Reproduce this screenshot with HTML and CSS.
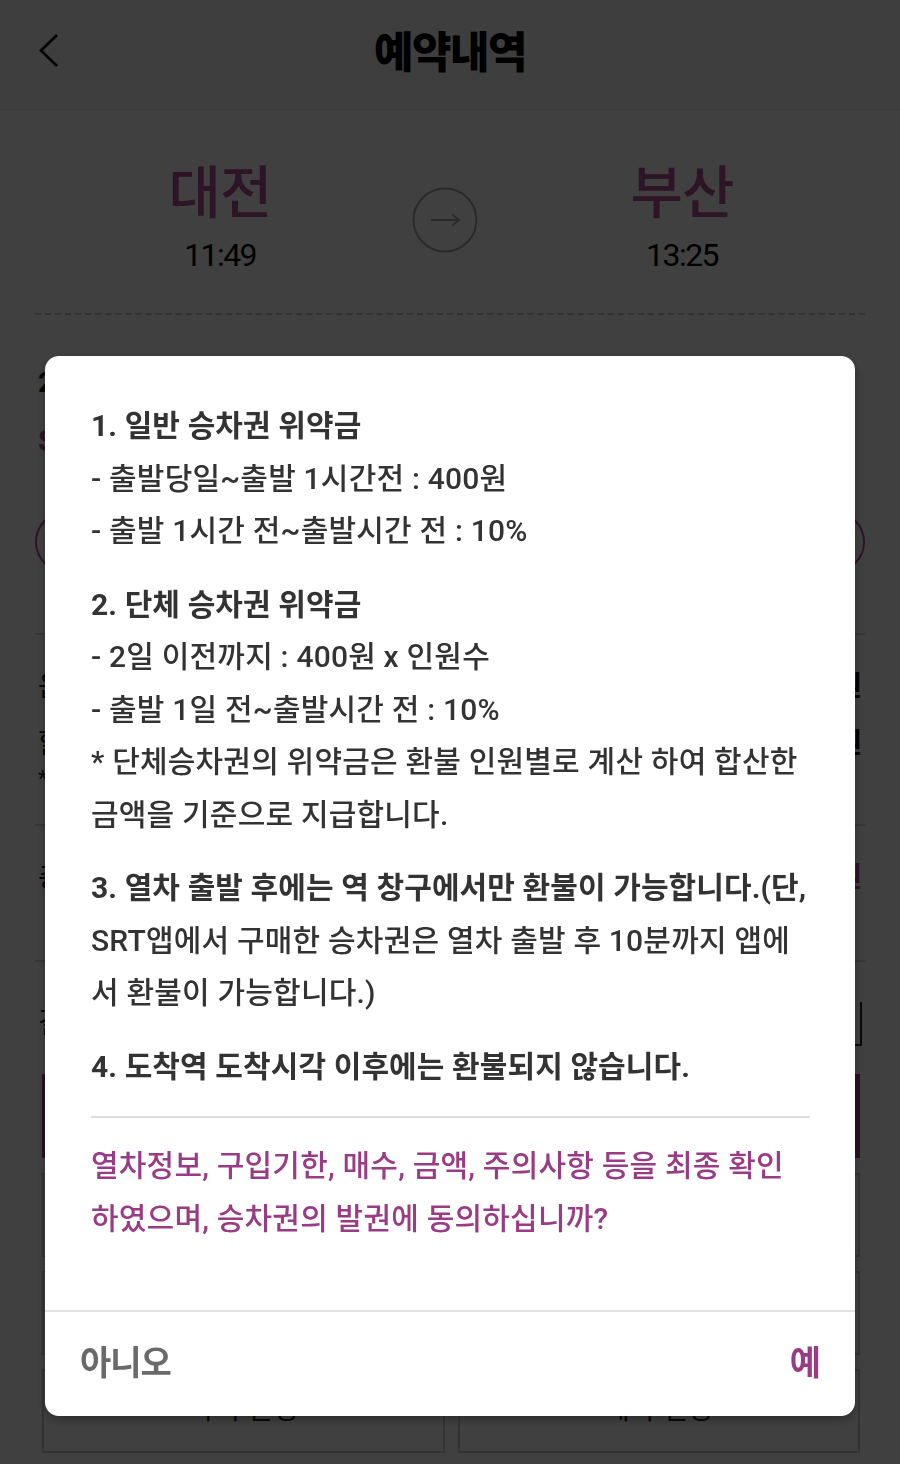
FILE: index.html
```html
<!DOCTYPE html>
<html lang="ko">
<head>
<meta charset="utf-8">
<title>예약내역</title>
<link rel="stylesheet" href="styles.css">
</head>
<body>
<div class="page">
  <header class="topbar">
    <span class="back">
      <svg width="20" height="36" viewBox="0 0 20 36"><polyline points="18,2 2,17.5 18,33" fill="none" stroke="#000" stroke-width="2.6"/></svg>
    </span>
    <h1 class="title">예약내역</h1>
  </header>

  <section class="route">
    <div class="station">
      <div class="st-name">대전</div>
      <div class="st-time">11:49</div>
    </div>
    <div class="arrow-circle">
      <svg width="66" height="66" viewBox="0 0 66 66"><circle cx="33" cy="33" r="31.5" fill="none" stroke="#a8a8a8" stroke-width="2"/><path d="M19 33h28M40 27l7 6-7 6" fill="none" stroke="#a8a8a8" stroke-width="2"/></svg>
    </div>
    <div class="station">
      <div class="st-name">부산</div>
      <div class="st-time">13:25</div>
    </div>
  </section>

  <div class="dots"></div>

  <section class="train">
    <div class="train-date">2020년 12월 5일 (토)</div>
    <div class="train-no">SRT 356 · 일반실 1명</div>
    <div class="pill">좌석 정보 보기</div>
  </section>

  <section class="fare">
    <div class="row"><span>운임요금</span><span class="val">52,900원</span></div>
    <div class="row"><span>할인금액</span><span class="val">0원</span></div>
    <div class="note">* 할인 내역은 승차권 정보에서 확인하세요.</div>
  </section>

  <section class="total">
    <div class="row"><span>총 결제금액</span><span class="val purple">52,900원</span></div>
  </section>

  <section class="pay">
    <div class="row"><span>결제수단</span><span class="select">신용카드</span></div>
  </section>

  <div class="pay-btn">결제하기</div>

  <div class="boxes">
    <div class="box">간편결제</div>
    <div class="box">포인트 결제</div>
    <div class="box">예약 취소</div>
    <div class="box">일정 변경</div>
    <div class="box">좌석 변경</div>
    <div class="box">예약 연장</div>
  </div>
</div>

<div class="overlay">
  <div class="dialog">
    <div class="dialog-body">
      <div class="sec">
        <div class="line head">1. 일반 승차권 위약금</div>
        <div class="line">- 출발당일~출발 1시간전 : 400원</div>
        <div class="line">- 출발 1시간 전~출발시간 전 : 10%</div>
      </div>
      <div class="sec">
        <div class="line head">2. 단체 승차권 위약금</div>
        <div class="line">- 2일 이전까지 : 400원 x 인원수</div>
        <div class="line">- 출발 1일 전~출발시간 전 : 10%</div>
        <div class="line">* 단체승차권의 위약금은 환불 인원별로 계산 하여 합산한</div>
        <div class="line">금액을 기준으로 지급합니다.</div>
      </div>
      <div class="sec">
        <div class="line head">3. 열차 출발 후에는 역 창구에서만 환불이 가능합니다.(단,</div>
        <div class="line">SRT앱에서 구매한 승차권은 열차 출발 후 10분까지 앱에</div>
        <div class="line">서 환불이 가능합니다.)</div>
      </div>
      <div class="sec">
        <div class="line head">4. 도착역 도착시각 이후에는 환불되지 않습니다.</div>
      </div>
      <div class="divider"></div>
      <div class="confirm">
        <div class="line">열차정보, 구입기한, 매수, 금액, 주의사항 등을 최종 확인</div>
        <div class="line">하였으며, 승차권의 발권에 동의하십니까?</div>
      </div>
    </div>
    <div class="dialog-foot">
      <span class="btn-no">아니오</span>
      <span class="btn-yes">예</span>
    </div>
  </div>
</div>
</body>
</html>
```

FILE: styles.css
```css
* { box-sizing: border-box; }
html, body { margin: 0; padding: 0; }
body {
  width: 900px;
  height: 1464px;
  overflow: hidden;
  background: #fff;
  font-family: Roboto, "Noto Sans CJK KR", sans-serif;
  color: #111;
}

.page { width: 900px; }

.topbar {
  height: 110px;
  background: #f6f6f6;
  display: flex;
  align-items: center;
  justify-content: center;
  position: relative;
  border-bottom: 1px solid #e6e6e6;
}
.back {
  position: absolute;
  left: 39px;
  top: 33px;
  display: block;
  width: 20px;
  height: 36px;
}
.back svg { display: block; }
.title {
  margin: 0 0 12px 0;
  font-family: "Noto Sans CJK KR", sans-serif;
  font-size: 43px;
  font-weight: 900;
  letter-spacing: -1.5px;
  color: #000;
}

.route {
  display: flex;
  align-items: center;
  padding: 46px 0 0 120px;
}
.station { width: 200px; text-align: center; }
.st-name {
  font-family: "Noto Sans CJK KR", sans-serif;
  font-size: 57px;
  font-weight: 500;
  line-height: 64px;
  color: #b24f97;
  letter-spacing: -1px;
}
.st-time {
  margin-top: 15px;
  font-size: 32px;
  line-height: 40px;
  color: #000;
  letter-spacing: -1.5px;
}
.arrow-circle {
  width: 66px;
  height: 66px;
  margin: 8px 104px 0 92px;
}
.arrow-circle svg { display: block; }

.dots {
  margin: 38px 35px 0;
  border-top: 2px dashed #c9c9c9;
}

.train { padding: 50px 35px 0 38px; }
.train-date {
  font-size: 28px;
  line-height: 36px;
  font-weight: 700;
  color: #222;
}
.train-no {
  margin-top: 20px;
  font-size: 30px;
  line-height: 40px;
  font-weight: 700;
  color: #b24f97;
}
.pill {
  margin: 50px 0 0 -3px;
  height: 62px;
  border: 2px solid #b24f97;
  border-radius: 31px;
  display: flex;
  align-items: center;
  justify-content: center;
  font-size: 28px;
  color: #b24f97;
}

.fare {
  margin: 60px 35px 0;
  border-top: 2px solid #d8d8d8;
  padding: 32px 3px 30px;
  border-bottom: 2px solid #d8d8d8;
}
.row {
  display: flex;
  justify-content: space-between;
  align-items: center;
  font-size: 28px;
  line-height: 40px;
  color: #222;
}
.fare .row + .row { margin-top: 17px; }
.val { font-weight: 700; color: #111; }
.purple { color: #b24f97; }
.note { font-size: 22px; line-height: 30px; color: #333; }

.total {
  margin: 0 35px;
  padding: 32px 3px 62px;
  border-bottom: 2px solid #d8d8d8;
}

.pay { margin: 0 35px; padding: 40px 3px 0; }
.select {
  width: 340px;
  height: 44px;
  border-right: 2px solid #222;
  border-bottom: 2px solid #222;
  padding-left: 10px;
  line-height: 40px;
}

.pay-btn {
  margin: 28px 40px 0 42px;
  height: 84px;
  background: #a13e8a;
  color: #fff;
  font-size: 30px;
  font-weight: 700;
  display: flex;
  align-items: center;
  justify-content: center;
}

.boxes {
  margin: 15px 40px 0 42px;
  display: grid;
  grid-template-columns: 403px 402px;
  column-gap: 13px;
  row-gap: 14px;
}
.box {
  height: 84px;
  border: 2px solid #cfcfcf;
  display: flex;
  align-items: flex-end;
  justify-content: center;
  padding-bottom: 24px;
  font-size: 28px;
  color: #222;
}

/* dialog */
.overlay {
  position: fixed;
  inset: 0;
  background: rgba(0, 0, 0, 0.75);
  padding: 356px 45px 0;
}
.dialog {
  background: #fff;
  border-radius: 14px;
  width: 810px;
  height: 1060px;
  display: flex;
  flex-direction: column;
  box-shadow: 0 4px 10px rgba(0,0,0,0.3);
  font-family: Roboto, "Noto Sans CJK KR", sans-serif;
}
.dialog-body {
  flex: 1;
  padding: 44px 40px 0 46px;
}
.sec + .sec { margin-top: 21px; }
.line {
  white-space: nowrap;
  font-size: 30px;
  line-height: 52.5px;
  font-weight: 500;
  color: #333;
  letter-spacing: 0.2px;
}
.line.head { font-weight: 700; letter-spacing: 0.1px; }
.divider {
  margin-top: 23px;
  margin-right: 5px;
  border-top: 2px solid #dcdcdc;
}
.confirm { margin-top: 22px; }
.confirm .line { color: #9a3b85; }

.dialog-foot {
  height: 106px;
  border-top: 2px solid #e2e2e2;
  display: flex;
  align-items: center;
  justify-content: space-between;
  padding: 0 34px 8px 35px;
  font-family: "Noto Sans CJK KR", sans-serif;
  font-size: 34px;
  font-weight: 700;
}
.btn-no { color: #6a6a6a; letter-spacing: -1px; }
.btn-yes { color: #9a3b85; }
```
